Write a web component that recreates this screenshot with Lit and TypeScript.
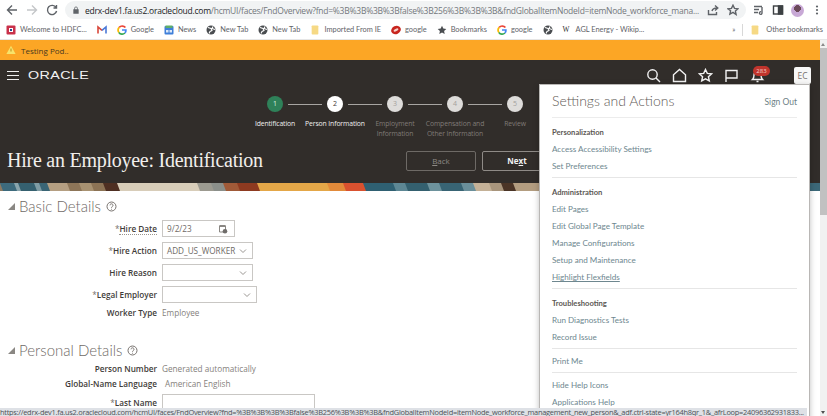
import {LitElement, html, css, svg} from 'lit';
import {customElement} from 'lit/decorators.js';

const URL_TEXT =
  'edrx-dev1.fa.us2.oraclecloud.com/hcmUI/faces/FndOverview?fnd=%3B%3B%3B%3Bfalse%3B256%3B%3B%3B&fndGlobalItemNodeId=itemNode_workforce_mana...';
const STATUS_TEXT =
  'https://edrx-dev1.fa.us2.oraclecloud.com/hcmUI/faces/FndOverview?fnd=%3B%3B%3B%3Bfalse%3B256%3B%3B%3B&fndGlobalItemNodeId=itemNode_workforce_management_new_person&_adf.ctrl-state=yr164h8qr_1&_afrLoop=24096362931833...';

const STEPS = [
  {n: 1, label: 'Identification', state: 'done'},
  {n: 2, label: 'Person Information', state: 'active'},
  {n: 3, label: 'Employment Information', state: 'off'},
  {n: 4, label: 'Compensation and Other Information', state: 'off'},
  {n: 5, label: 'Review', state: 'off'},
];

// x, width, colour of the slanted strips in the banner
const STRIPS: [number, number, string][] = [
  [0, 14, '#3d6a7c'], [14, 4, '#8aa5ad'], [18, 16, '#35606f'], [34, 5, '#7f9ca4'],
  [39, 8, '#3a6575'], [47, 20, '#b59f82'], [67, 12, '#8d7558'], [79, 12, '#a89272'],
  [91, 12, '#8c7355'], [103, 14, '#4e2f22'], [117, 80, '#d8cdb9'], [197, 14, '#9c9a90'],
  [211, 12, '#8b8f8a'], [223, 14, '#a05a38'], [237, 20, '#8e3a20'], [257, 70, '#e4a748'],
  [327, 16, '#e28a3a'], [343, 20, '#d9512f'], [363, 30, '#2f6072'], [393, 12, '#5d8794'],
  [405, 22, '#34606f'], [427, 12, '#6d929c'], [439, 22, '#386474'], [461, 12, '#6a8f9a'],
  [473, 16, '#c4b197'], [489, 12, '#a8957c'], [501, 12, '#4a3426'], [513, 30, '#b39d80'],
  [543, 60, '#c9b89f'], [603, 120, '#5e7f88'], [723, 60, '#c84b33'], [783, 40, '#3c6878'],
];

const MENU = [
  {head: 'Personalization', links: ['Access Accessibility Settings', 'Set Preferences']},
  {
    head: 'Administration',
    links: ['Edit Pages', 'Edit Global Page Template', 'Manage Configurations', 'Setup and Maintenance', 'Highlight Flexfields'],
  },
  {head: 'Troubleshooting', links: ['Run Diagnostics Tests', 'Record Issue']},
  {head: '', links: ['Print Me']},
  {head: '', links: ['Hide Help Icons', 'Applications Help']},
];

const globe = html`<svg class="fav" viewBox="0 0 10 10"><circle cx="5" cy="5" r="4.5" fill="#4a4d50"/><path d="M2 2.5l3 1 1 2-2 1-1 2M7 1.5l-1 2 3 1" stroke="#fff" stroke-width="1.1" fill="none"/></svg>`;
const folder = html`<svg class="fav" viewBox="0 0 10 12"><rect x="1" y="0.5" width="8" height="11" rx="1" fill="#f6d985"/></svg>`;
const gIcon = html`<svg class="fav" viewBox="0 0 10 10" fill="none" stroke-width="1.7"><path d="M8.4 2.6A4 4 0 0 0 2.2 2.4" stroke="#ea4335"/><path d="M2.2 2.4a4 4 0 0 0-.3 5" stroke="#fbbc05"/><path d="M1.9 7.4a4 4 0 0 0 6 .6" stroke="#34a853"/><path d="M7.9 8c.8-.8 1.1-1.8 1-3H5" stroke="#4285f4"/></svg>`;

@customElement('app-root')
export class AppRoot extends LitElement {
  static styles = css`
    :host {
      display: block;
      position: relative;
      width: 827px;
      height: 416px;
      overflow: hidden;
      background: #fff;
      font-family: 'Open Sans', 'Liberation Sans', sans-serif;
      color: #3d3a38;
    }

    /* browser chrome */
    .toolbar {
      display: flex;
      align-items: center;
      height: 20px;
      padding-left: 6px;
      background: #fff;
    }
    .tb-icon {
      width: 12px;
      height: 12px;
      flex: none;
      fill: none;
      stroke: #5f6368;
      stroke-width: 1.4;
    }
    .nav-btns {
      display: flex;
      gap: 8px;
      margin-right: 7px;
    }
    .omnibox {
      display: flex;
      align-items: center;
      width: 681px;
      height: 18px;
      flex: none;
      padding: 0 7px 0 7px;
      box-sizing: border-box;
      border-radius: 9px;
      background: #f1f3f4;
    }
    .url {
      flex: 1;
      margin: 0 6px 0 5px;
      overflow: hidden;
      font-size: 8.5px;
      letter-spacing: -0.24px;
      white-space: nowrap;
      color: #74787c;
    }
    .url b {
      font-weight: 400;
      color: #202124;
    }
    .omni-end {
      display: flex;
      gap: 8px;
    }
    .tb-right {
      display: flex;
      align-items: center;
      gap: 7px;
      margin-left: 7px;
    }
    .avatar {
      width: 13px;
      height: 13px;
      border-radius: 50%;
      background: radial-gradient(circle at 50% 35%, #6b4a5a 30%, #c8a9d6 32%);
    }
    .bookmarks {
      display: flex;
      align-items: center;
      height: 20px;
      padding: 0 4px 0 6px;
      background: #fff;
      box-sizing: border-box;
      border-bottom: 1px solid #e6e6e6;
      font-family: Lato, 'Open Sans', sans-serif;
      font-size: 7.4px;
      color: #5f6368;
      white-space: nowrap;
    }
    .bm {
      display: flex;
      align-items: center;
      gap: 4px;
      margin-right: 10px;
    }
    .fav {
      width: 10px;
      height: 10px;
      flex: none;
    }
    .bm-end {
      display: flex;
      align-items: center;
      gap: 7px;
      margin-left: auto;
    }
    .bm-sep {
      width: 1px;
      height: 12px;
      background: #d8d8d8;
    }

    /* page */
    .viewport {
      display: flex;
      height: 376px;
    }
    .page {
      flex: 1;
      min-width: 0;
    }
    .scrollbar {
      position: relative;
      width: 7px;
      background: #f1f1f1;
    }
    .thumb {
      margin-top: 8px;
      height: 167px;
      background: #c1c1c1;
    }
    .notice {
      display: flex;
      align-items: center;
      gap: 5px;
      height: 20px;
      padding-left: 6px;
      background: #fca625;
      font-size: 8px;
      color: #4a3a20;
    }
    .hero {
      height: 123px;
      background: #312d2a;
      color: #fff;
    }
    .topbar {
      display: flex;
      align-items: center;
      height: 30px;
      padding: 0 9px 0 7px;
    }
    .burger {
      width: 12px;
      height: 9px;
      margin-right: 9px;
      border-top: 1px solid #eee;
      border-bottom: 1px solid #eee;
      position: relative;
      box-sizing: border-box;
    }
    .burger::after {
      content: '';
      position: absolute;
      left: 0;
      right: 0;
      top: 3px;
      height: 1px;
      background: #eee;
    }
    .logo {
      font-family: 'Liberation Sans', sans-serif;
      font-size: 11px;
      letter-spacing: 0.3px;
      transform: scaleX(1.3);
      transform-origin: left center;
      color: #f3f3f3;
    }
    .top-icons {
      display: flex;
      align-items: center;
      margin-left: auto;
    }
    .top-icon {
      width: 15px;
      height: 15px;
      margin-left: 11px;
      fill: none;
      stroke: #f2f2f2;
      stroke-width: 1.4;
    }
    .bell {
      position: relative;
      display: flex;
    }
    .badge {
      position: absolute;
      left: 14px;
      top: -2px;
      width: 17px;
      height: 10px;
      border-radius: 5px;
      background: #c0342c;
      font-size: 6px;
      line-height: 10px;
      text-align: center;
      color: #f4d0c8;
    }
    .user {
      width: 17px;
      height: 17px;
      margin-left: 29px;
      border-radius: 2px;
      background: #f7f7f7;
      font-size: 8.5px;
      line-height: 17px;
      text-align: center;
      color: #77726e;
    }
    .stepper {
      display: flex;
      padding-left: 245px;
      margin-top: 6px;
    }
    .step {
      position: relative;
      display: flex;
      flex-direction: column;
      align-items: center;
      width: 60px;
      flex: none;
    }
    .dot {
      width: 16px;
      height: 16px;
      border-radius: 50%;
      background: #fff;
      font-size: 7px;
      line-height: 16px;
      text-align: center;
      color: #3d3a38;
    }
    .step.done .dot {
      background: #2f8159;
      color: #d8efe2;
    }
    .step.off .dot {
      background: #dedcda;
      color: #a3a09c;
    }
    .step:not(:last-child)::after {
      content: '';
      position: absolute;
      left: 43px;
      top: 8px;
      width: 34px;
      height: 1px;
      background: #a8a5a2;
    }
    .step-label {
      width: 60px;
      margin-top: 7px;
      font-size: 6.8px;
      line-height: 10px;
      text-align: center;
      letter-spacing: -0.1px;
      color: #f0f0f0;
    }
    .step.off .step-label {
      color: #807b77;
    }
    .title-row {
      display: flex;
      align-items: center;
      margin-top: 10px;
      padding-left: 7px;
    }
    .title {
      width: 399px;
      flex: none;
      font-family: 'Liberation Serif', serif;
      font-size: 20px;
      letter-spacing: -0.25px;
      color: #f1efec;
    }
    .btn {
      width: 70px;
      height: 20px;
      box-sizing: border-box;
      border: 1px solid #6e6a66;
      border-radius: 2px;
      font-size: 8px;
      line-height: 18px;
      text-align: center;
      color: #8d8985;
    }
    .btn.next {
      margin-left: 6px;
      border-color: #8f8b87;
      font-weight: 700;
      color: #f2f2f2;
    }
    .banner {
      display: block;
      width: 100%;
      height: 8px;
    }

    /* form */
    .section {
      display: flex;
      align-items: center;
      height: 20px;
      margin-top: 5px;
      padding-left: 8px;
      font-family: Lato, 'Open Sans', sans-serif;
      font-size: 15px;
      font-weight: 300;
      color: #6f6a66;
    }
    .section.second {
      margin-top: 22px;
    }
    .tri {
      width: 7px;
      height: 7px;
      margin-right: 4px;
      fill: #8a8783;
      flex: none;
    }
    .help {
      width: 11px;
      height: 11px;
      margin-left: 5px;
      fill: none;
      stroke: #77726e;
    }
    .form {
      display: grid;
      grid-template-columns: 157px 1fr;
      column-gap: 5px;
      row-gap: 5px;
      align-items: center;
      margin-top: 4px;
    }
    .label {
      font-size: 8.2px;
      font-weight: 600;
      line-height: 10px;
      text-align: right;
      white-space: nowrap;
      color: #3f3c39;
    }
    .label i {
      font-style: normal;
      font-weight: 400;
      color: #77726e;
    }
    .label span.hint {
      border-bottom: 1px dotted #99958f;
    }
    .value {
      font-size: 8.2px;
      line-height: 10px;
      color: #85817c;
    }
    .value.shift {
      padding-left: 3px;
    }
    .field {
      display: flex;
      align-items: center;
      justify-content: space-between;
      height: 17px;
      padding: 0 3px 0 4px;
      box-sizing: border-box;
      border: 1px solid #c9c7c4;
      font-size: 8.2px;
      color: #6f6a66;
    }
    .chev {
      width: 8px;
      height: 8px;
      margin-right: 2px;
      fill: none;
      stroke: #9a9692;
    }
    .cal {
      width: 10px;
      height: 10px;
      margin-right: 3px;
    }

    /* settings popup */
    .popup {
      position: absolute;
      left: 539px;
      top: 84px;
      width: 271px;
      height: 340px;
      padding: 0 12px;
      box-sizing: border-box;
      background: #fff;
      border: 1px solid #b9b7b5;
      box-shadow: 0 2px 6px rgba(0, 0, 0, 0.25);
      font-family: Lato, 'Open Sans', sans-serif;
    }
    .popup-head {
      display: flex;
      align-items: center;
      justify-content: space-between;
      height: 33px;
      padding-bottom: 1px;
      box-sizing: border-box;
      border-bottom: 1px solid #ececec;
    }
    .popup-title {
      font-size: 14px;
      font-weight: 300;
      color: #5f5b57;
    }
    .signout {
      padding-top: 3px;
      font-size: 8.5px;
      color: #6d7f86;
    }
    .group {
      padding: 6px 0 2px;
      border-bottom: 1px solid #e6e6e6;
    }
    .group.plain {
      padding: 4px 0 2px;
    }
    .group:last-child {
      border-bottom: none;
    }
    .group-head {
      font-size: 7.6px;
      font-weight: 700;
      line-height: 17px;
      color: #5c5854;
    }
    .link {
      font-size: 8.1px;
      line-height: 17px;
      color: #6e878f;
    }
    .link.hl {
      text-decoration: underline;
    }

    /* link preview and scroll arrows over the page */
    .status {
      position: absolute;
      left: 0;
      top: 408px;
      width: 807px;
      height: 8px;
      overflow: hidden;
      background: #dee1e6;
      font-size: 7.4px;
      line-height: 9px;
      letter-spacing: -0.25px;
      white-space: nowrap;
      color: #4d5156;
    }
    .arrow {
      position: absolute;
      left: 1px;
      width: 0;
      height: 0;
      border-left: 2.5px solid transparent;
      border-right: 2.5px solid transparent;
    }
    .arrow.up {
      top: 3px;
      border-bottom: 3px solid #8a8a8a;
    }
    .arrow.down {
      bottom: 2px;
      border-top: 3px solid #505050;
    }
  `;

  private _toolbar() {
    return html`
      <div class="toolbar">
        <div class="nav-btns">
          <svg class="tb-icon" viewBox="0 0 12 12"><path d="M11 6H1.5M6 1.5 1.5 6 6 10.5"/></svg>
          <svg class="tb-icon" viewBox="0 0 12 12" style="stroke:#c4c6c9"><path d="M1 6h9.5M6 1.5 10.5 6 6 10.5"/></svg>
          <svg class="tb-icon" viewBox="0 0 12 12"><path d="M10 3.5A4.6 4.6 0 1 0 10.6 7M10.5 1v3h-3"/></svg>
        </div>
        <div class="omnibox">
          <svg class="tb-icon" viewBox="0 0 12 12" style="width:8px;height:10px;stroke:none;fill:#5f6368"><path d="M2 5h8v6.5H2zM3.5 5V3.2a2.5 2.5 0 0 1 5 0V5H7.4V3.2a1.4 1.4 0 0 0-2.8 0V5z"/></svg>
          <div class="url"><b>edrx-dev1.fa.us2.oraclecloud.com</b>${URL_TEXT.slice(32)}</div>
          <div class="omni-end">
            <svg class="tb-icon" viewBox="0 0 12 12"><path d="M1.5 6v4.5h8V8M5 7c.5-2 2-3 5-3M8 1.5 10.8 4 8 6.5"/></svg>
            <svg class="tb-icon" viewBox="0 0 12 12"><path d="m6 1.2 1.5 3.2 3.5.4-2.6 2.3.7 3.4L6 8.4l-3.1 1.7.7-3.4L1 4.8l3.5-.4z"/></svg>
          </div>
        </div>
        <div class="tb-right">
          <svg class="tb-icon" viewBox="0 0 12 12"><path d="M1 2.5h8M1 5.5h5M1 8.5h4M9 3v6a1.3 1.3 0 1 1-1-1.2"/></svg>
          <svg class="tb-icon" viewBox="0 0 12 12" style="stroke:#3c4043"><rect x="1.5" y="2" width="9" height="8"/><rect x="6.5" y="2" width="4" height="8" fill="#3c4043"/></svg>
          <div class="avatar"></div>
          <svg class="tb-icon" viewBox="0 0 12 12" style="stroke:none;fill:#5f6368"><circle cx="6" cy="2.5" r="1.1"/><circle cx="6" cy="6" r="1.1"/><circle cx="6" cy="9.5" r="1.1"/></svg>
        </div>
      </div>
    `;
  }

  private _bookmarks() {
    return html`
      <div class="bookmarks">
        <div class="bm">
          <svg class="fav" viewBox="0 0 10 10"><rect x="0.5" y="0.5" width="9" height="9" rx="1" fill="#c9314a"/><rect x="3" y="3" width="4" height="4" fill="#fff"/><rect x="4" y="4" width="2" height="2" fill="#24508f"/></svg>
          Welcome to HDFC...
        </div>
        <div class="bm">
          <svg class="fav" viewBox="0 0 10 10" fill="none" stroke-width="1.6"><path d="M1 8.5V2l4 3.4" stroke="#d9473a"/><path d="M9 8.5V2L5 5.4" stroke="#4a78d8"/></svg>
        </div>
        <div class="bm">${gIcon} Google</div>
        <div class="bm">
          <svg class="fav" viewBox="0 0 10 10"><rect x="0.5" y="1" width="9" height="8.5" rx="1" fill="#3f7fd9"/><rect x="1.5" y="0.5" width="7" height="2.5" fill="#5fae6a"/><rect x="2" y="5" width="2.5" height="2.5" fill="#dce9fa"/><rect x="5.5" y="5" width="2.5" height="2.5" fill="#dce9fa"/></svg>
          News
        </div>
        <div class="bm">${globe} New Tab</div>
        <div class="bm">${globe} New Tab</div>
        <div class="bm">${folder} Imported From IE</div>
        <div class="bm">
          <svg class="fav" viewBox="0 0 10 10"><ellipse cx="5" cy="5" rx="5" ry="4" fill="#c8261f" transform="rotate(-25 5 5)"/><ellipse cx="5" cy="5" rx="2.6" ry="1.2" fill="#f6d5cf" transform="rotate(-25 5 5)"/></svg>
          google
        </div>
        <div class="bm">
          <svg class="fav" viewBox="0 0 10 10"><path d="m5 .8 1.3 2.8 3 .4-2.2 2 .6 3L5 7.5 2.3 9l.6-3L.7 4l3-.4z" fill="#4a4d50"/></svg>
          Bookmarks
        </div>
        <div class="bm">${gIcon} google</div>
        <div class="bm">${globe}</div>
        <div class="bm" style="gap:6px"><span style="font-family:'Liberation Serif',serif;color:#333">W</span> AGL Energy - Wikip...</div>
        <div class="bm-end">
          <span>»</span>
          <div class="bm-sep"></div>
          <div class="bm" style="margin:0;gap:6px">${folder} Other bookmarks</div>
        </div>
      </div>
    `;
  }

  private _topbar() {
    return html`
      <div class="topbar">
        <div class="burger"></div>
        <div class="logo">ORACLE</div>
        <div class="top-icons">
          <svg class="top-icon" viewBox="0 0 15 15"><circle cx="6.5" cy="6.5" r="4.7"/><path d="m10 10 4 4"/></svg>
          <svg class="top-icon" viewBox="0 0 15 15"><path d="M1.5 13.5V6.8L7.5 1.5l6 5.3v6.7z"/></svg>
          <svg class="top-icon" viewBox="0 0 15 15"><path d="m7.5 1.5 1.8 3.9 4.2.5-3.1 2.8.9 4.2-3.8-2.1-3.8 2.1.9-4.2-3.1-2.8 4.2-.5z"/></svg>
          <svg class="top-icon" viewBox="0 0 15 15"><path d="M2 14V2.5h11v7.5H2"/></svg>
          <div class="bell">
            <svg class="top-icon" viewBox="0 0 15 15"><path d="M2.5 11.5c1.2-1 1.5-2 1.5-4.5a3.5 3.5 0 0 1 7 0c0 2.500.3 3.500 1.500 4.500zM6.500 13.500h2"/></svg>
            <div class="badge">283</div>
          </div>
          <div class="user">EC</div>
        </div>
      </div>
    `;
  }

  private _stepper() {
    return html`
      <div class="stepper">
        ${STEPS.map(
          (s) => html`
            <div class="step ${s.state}">
              <div class="dot">${s.n}</div>
              <div class="step-label">${s.label}</div>
            </div>
          `
        )}
      </div>
    `;
  }

  private _banner() {
    return html`
      <svg class="banner" viewBox="0 0 820 8" preserveAspectRatio="none">
        <rect width="820" height="8" fill="#8d7a62"/>
        ${STRIPS.map(
          ([x, w, c]) => svg`<polygon points="${x},0 ${x + w + 3},0 ${x + w + 6},8 ${x + 3},8" fill="${c}"/>`
        )}
      </svg>
    `;
  }

  private _section(title: string, second = false) {
    return html`
      <div class="section ${second ? 'second' : ''}">
        <svg class="tri" viewBox="0 0 7 7"><path d="M7 0v7H0z"/></svg>
        ${title}
        <svg class="help" viewBox="0 0 11 11"><circle cx="5.500" cy="5.500" r="4.500"/><path d="M4 4.300a1.500 1.500 0 1 1 2.300 1.300c-.6.400-.8.700-.8 1.200M5.500 7.800v.8"/></svg>
      </div>
    `;
  }

  private _chevron() {
    return html`<svg class="chev" viewBox="0 0 8 8"><path d="m1 2.500 3 3 3-3"/></svg>`;
  }

  private _form() {
    return html`
      ${this._section('Basic Details')}
      <div class="form">
        <div class="label"><i>*</i><span class="hint">Hire Date</span></div>
        <div class="field" style="width:73px">
          9/2/23
          <svg class="cal" viewBox="0 0 10 10"><path d="M1.500 2h6v6h-6z" fill="none" stroke="#8a8783"/><path d="M1.500 1h6v2h-6z" fill="#8a8783"/><circle cx="7" cy="7.300" r="2.300" fill="#6f6c69"/></svg>
        </div>
        <div class="label"><i>*</i>Hire Action</div>
        <div class="field" style="width:91px">ADD_US_WORKER ${this._chevron()}</div>
        <div class="label">Hire Reason</div>
        <div class="field" style="width:91px;justify-content:flex-end">${this._chevron()}</div>
        <div class="label"><i>*</i>Legal Employer</div>
        <div class="field" style="width:95px;justify-content:flex-end">${this._chevron()}</div>
        <div class="label">Worker Type</div>
        <div class="value">Employee</div>
      </div>
      ${this._section('Personal Details', true)}
      <div class="form">
        <div class="label">Person Number</div>
        <div class="value">Generated automatically</div>
        <div class="label">Global-Name Language</div>
        <div class="value shift">American English</div>
        <div class="label"><i>*</i>Last Name</div>
        <div class="field" style="width:153px"></div>
      </div>
    `;
  }

  private _popup() {
    return html`
      <div class="popup">
        <div class="popup-head">
          <div class="popup-title">Settings and Actions</div>
          <div class="signout">Sign Out</div>
        </div>
        ${MENU.map(
          (g) => html`
            <div class="group ${g.head ? '' : 'plain'}">
              ${g.head ? html`<div class="group-head">${g.head}</div>` : ''}
              ${g.links.map(
                (l) => html`<div class="link ${l === 'Highlight Flexfields' ? 'hl' : ''}">${l}</div>`
              )}
            </div>
          `
        )}
      </div>
    `;
  }

  render() {
    return html`
      ${this._toolbar()} ${this._bookmarks()}
      <div class="viewport">
        <div class="page">
          <div class="notice">
            <svg class="fav" viewBox="0 0 10 10"><path d="M5 .8 9.600 9H.4z" fill="#f7e36a"/><path d="M5 3.500v3" stroke="#b98a1c"/></svg>
            Testing Pod..
          </div>
          <div class="hero">
            ${this._topbar()} ${this._stepper()}
            <div class="title-row">
              <div class="title">Hire an Employee: Identification</div>
              <div class="btn"><u>B</u>ack</div>
              <div class="btn next">Ne<u>x</u>t</div>
            </div>
          </div>
          ${this._banner()} ${this._form()}
        </div>
        <div class="scrollbar">
          <div class="arrow up"></div>
          <div class="thumb"></div>
          <div class="arrow down"></div>
        </div>
      </div>
      ${this._popup()}
      <div class="status">${STATUS_TEXT}</div>
    `;
  }
}
